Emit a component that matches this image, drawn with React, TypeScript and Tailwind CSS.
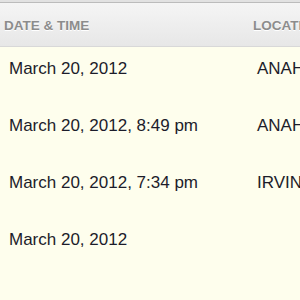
import React from 'react'

const rows = [
  { date: 'March 20, 2012', location: 'ANAHEIM' },
  { date: 'March 20, 2012, 8:49 pm', location: 'ANAHEIM' },
  { date: 'March 20, 2012, 7:34 pm', location: 'IRVINE' },
  { date: 'March 20, 2012', location: '' },
]

const App: React.FC = () => {
  return (
    <div className="w-[300px] h-[300px] overflow-hidden bg-[#fefeed] font-['Liberation_Sans',Arial,sans-serif]">
      {/* Top rule */}
      <div className="h-[3px] bg-[#e2e2e2] border-b border-[#bcbcbc]"></div>

      {/* Column headings */}
      <div className="flex h-[44px] bg-gradient-to-b from-[#f5f5f5] to-[#e7e7e7] border-b border-[#d8d8d8]">
        <div className="shrink-0 w-[250px] pl-[4px] pt-[4px] flex items-center text-[13.5px] font-bold text-[#8c8c8c] [text-shadow:0_1px_0_#fff]">
          DATE &amp; TIME
        </div>
        <div className="pl-[3px] pt-[4px] flex items-center text-[13.5px] font-bold text-[#8c8c8c] whitespace-nowrap [text-shadow:0_1px_0_#fff]">
          LOCATION
        </div>
      </div>

      {/* Table rows */}
      <div className="flex h-[249px]">
        <div className="shrink-0 w-[249px]">
          {rows.map((row, i) => (
            <div className="h-[57px] pl-[9px] pt-[12px] text-[17px] leading-[20px] text-[#1c1c2a]" key={i}>
              {row.date}
            </div>
          ))}
        </div>
        <div className="w-[2px] bg-[#dcdcdc]"></div>
        <div className="pl-[8px] whitespace-nowrap">
          {rows.map((row, i) => (
            <div className="h-[57px] pt-[12px] text-[17px] leading-[20px] text-[#1c1c2a]" key={i}>
              {row.location}
            </div>
          ))}
        </div>
      </div>
    </div>
  )
}

export default App
